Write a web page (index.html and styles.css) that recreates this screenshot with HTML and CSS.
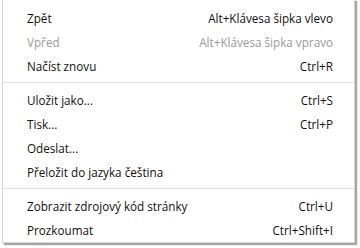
FILE: index.html
```html
<!DOCTYPE html>
<html lang="cs">
<head>
<meta charset="utf-8">
<link rel="stylesheet" href="styles.css">
</head>
<body>
<div class="menu">
  <div class="item"><span class="label">Zpět</span><span class="key">Alt+Klávesa šipka vlevo</span></div>
  <div class="item disabled"><span class="label">Vpřed</span><span class="key">Alt+Klávesa šipka vpravo</span></div>
  <div class="item"><span class="label">Načíst znovu</span><span class="key">Ctrl+R</span></div>
  <div class="sep"></div>
  <div class="item"><span class="label">Uložit jako...</span><span class="key">Ctrl+S</span></div>
  <div class="item"><span class="label">Tisk...</span><span class="key">Ctrl+P</span></div>
  <div class="item"><span class="label">Odeslat...</span><span class="key"></span></div>
  <div class="item"><span class="label">Přeložit do jazyka čeština</span><span class="key"></span></div>
  <div class="sep"></div>
  <div class="item"><span class="label">Zobrazit zdrojový kód stránky</span><span class="key">Ctrl+U</span></div>
  <div class="item"><span class="label">Prozkoumat</span><span class="key">Ctrl+Shift+I</span></div>
</div>
</body>
</html>
```
FILE: styles.css
```css
html, body {
  margin: 0;
  padding: 0;
  background: #ffffff;
}
body {
  width: 360px;
  height: 248px;
  overflow: hidden;
  font-family: "Open Sans", "Noto Sans", sans-serif;
  font-size: 11.7px;
  color: #111111;
}
.menu {
  margin: -1px 0 0 2px;
  width: 351px;
  padding: 6px 0 0 0;
  background: #ffffff;
  border: 1px solid #d4d4d4;
  box-shadow: 2px 2px 1px rgba(0, 0, 0, 0.35);
  display: flex;
  flex-direction: column;
}
.item {
  height: 24px;
  display: flex;
  align-items: center;
  justify-content: space-between;
  padding: 0 21px 0 24px;
  white-space: nowrap;
}
.disabled {
  color: #9a9a9a;
}
.sep {
  height: 1px;
  background: #e0e0e0;
  margin: 4px 0 5px 0;
}
```
